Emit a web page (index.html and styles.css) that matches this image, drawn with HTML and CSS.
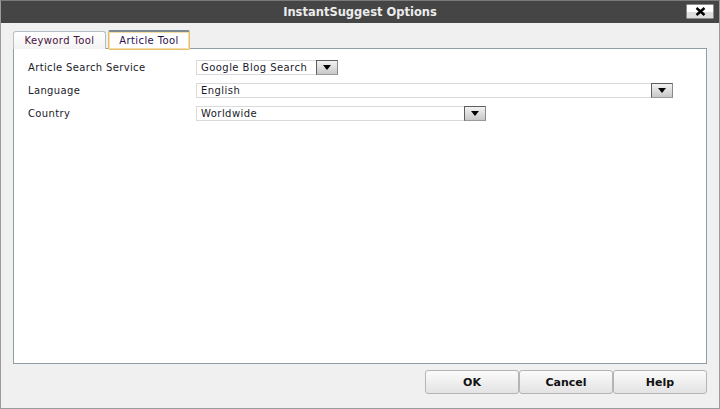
FILE: index.html
```html
<!DOCTYPE html>
<html>
<head>
<meta charset="utf-8">
<link rel="stylesheet" href="styles.css">
</head>
<body>
<div class="window">
  <div class="titlebar">
    <span class="title">InstantSuggest Options</span>
    <button class="close" aria-label="Close">
      <svg width="11" height="9" viewBox="0 0 11 9"><path d="M1.5 1 L9.5 8 M9.5 1 L1.5 8" stroke="#000" stroke-width="2.4" fill="none"/></svg>
    </button>
  </div>
  <div class="content">
    <div class="tabs">
      <div class="tab">Keyword Tool</div>
      <div class="tab active">Article Tool</div>
    </div>
    <div class="panel">
      <div class="form">
        <div class="label">Article Search Service</div>
        <div class="select s1"><span class="val">Google Blog Search</span><span class="arrow"></span></div>
        <div class="label">Language</div>
        <div class="select s2"><span class="val">English</span><span class="arrow"></span></div>
        <div class="label">Country</div>
        <div class="select s3"><span class="val">Worldwide</span><span class="arrow"></span></div>
      </div>
    </div>
    <div class="footer">
      <button class="btn">OK</button>
      <button class="btn">Cancel</button>
      <button class="btn">Help</button>
    </div>
  </div>
</div>
</body>
</html>
```
FILE: styles.css
```css
html, body { margin: 0; padding: 0; }
body { font-family: "DejaVu Sans", Verdana, sans-serif; font-size: 10px; color: #1a1a1a; }
.window {
  width: 720px; height: 409px; box-sizing: border-box;
  border: 1px solid #9a9a9a; border-top-color: #7a7a7a;
  background: #f0f0f0; display: flex; flex-direction: column;
}
.titlebar {
  height: 22px; background: #454545; position: relative;
  display: flex; align-items: center; justify-content: center;
}
.title { color: #ececec; font-weight: bold; font-size: 11.5px; letter-spacing: 0; }
.close {
  position: absolute; right: 5px; top: 3px; width: 28px; height: 15px;
  box-sizing: border-box; border: 1px solid #8c8c8c; border-radius: 1px; padding: 0;
  background: linear-gradient(#ffffff 0, #ffffff 55%, #dedede 55%, #dedede 100%);
  display: flex; align-items: center; justify-content: center;
}
.close svg { display: block; }
.content { flex: 1; display: flex; flex-direction: column; padding: 7px 12px 0 12px; }
.tabs { display: flex; align-items: flex-end; gap: 2px; height: 19px; position: relative; z-index: 1; }
.tab {
  height: 18px; box-sizing: border-box; padding: 0 6px;
  border: 1px solid #b4bfc5; border-bottom: none; border-radius: 3px 3px 0 0;
  background: linear-gradient(#ffffff, #f3f3f3);
  display: flex; align-items: center; color: #4a1040; width: 93px; justify-content: center;
  letter-spacing: 0.4px;
}
.tab.active {
  height: 20px; width: 82px; margin-bottom: -1px;
  border: 1px solid #e8bf6e; border-top: 2px solid #7d8a90; border-radius: 2px;
  background: #ffffff; color: #2a1050;
  box-shadow: inset 0 0 0 1px #f4dca8;
}
.panel {
  height: 316px; box-sizing: border-box; background: #fff;
  border: 1px solid #8d9ea6; margin-top: -1px;
  padding: 11px 14px 0 14px;
}
.form { display: grid; grid-template-columns: 168px 1fr; row-gap: 8px; align-items: center; }
.label { color: #1a1a2a; letter-spacing: 0.35px; }
.select {
  height: 15px; box-sizing: border-box; border: 1px solid #dadada; background: #fff;
  display: flex; align-items: center; justify-content: space-between; padding-left: 4px;
}
.s1 { width: 142px; }
.s2 { width: 477px; }
.s3 { width: 290px; }
.val { color: #1a1a2a; letter-spacing: 0.45px; }
.arrow {
  width: 22px; height: 15px; box-sizing: border-box; margin-right: -1px;
  border: 1px solid #5e5e5e; border-right-color: #8a8a8a; border-bottom-color: #9a9a9a;
  background: linear-gradient(#f2f2f2, #c8c8c8);
  position: relative;
}
.arrow::after {
  content: ""; position: absolute; left: 6px; top: 4px;
  border-left: 4px solid transparent; border-right: 4px solid transparent; border-top: 5px solid #000;
}
.footer { display: flex; justify-content: flex-end; gap: 0; padding-top: 6px; }
.btn {
  width: 94px; height: 24px; box-sizing: border-box; border: 1px solid #b5b5b5; border-radius: 3px;
  background: linear-gradient(#fbfbfb, #e3e3e3);
  font-family: "DejaVu Sans", Verdana, sans-serif; font-weight: bold; font-size: 11px; color: #111;
  padding: 0;
}
```
